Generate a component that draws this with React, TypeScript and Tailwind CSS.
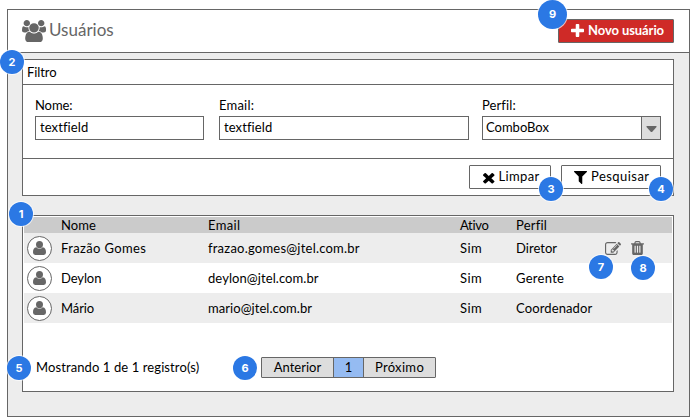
import type { ReactNode } from "react";

const USERS =
  "M657 896q-162 5-265 128h-134q-82 0-138-40.5t-56-118.5q0-353 124-353 6 0 43.5 21t97.5 42.5 119 21.5q67 0 133-23-5 37-5 66 0 159 90 256zm1071 637q0 120-73 189.5t-194 69.5h-874q-121 0-194-69.5t-73-189.5q0-53 3.5-103.5t14-109 26.5-108.5 43-97.5 62-81 85.5-53.5 111.5-20q10 0 43 21.5t73 48 107 48 135 21.5 135-21.5 107-48 73-48 43-21.5q61 0 111.5 20t85.5 53.5 62 81 43 97.5 26.5 108.5 14 109 3.5 103.5zm-1024-1277q0 106-75 181t-181 75-181-75-75-181 75-181 181-75 181 75 75 181zm704 384q0 159-112.5 271.5t-271.5 112.5-271.5-112.5-112.5-271.5 112.5-271.5 271.5-112.5 271.5 112.5 112.5 271.5zm576 225q0 78-56 118.5t-138 40.5h-134q-103-123-265-128 90-97 90-256 0-29-5-66 66 23 133 23 59 0 119-21.5t97.5-42.5 43.5-21q124 0 124 353zm-128-609q0 106-75 181t-181 75-181-75-75-181 75-181 181-75 181 75 75 181z";
const USER =
  "M6.5 0a3.5 3.6 0 0 1 3.5 3.6 3.5 3.6 0 0 1-7 0A3.5 3.6 0 0 1 6.5 0zM3.3 6.2Q4.7 7.8 6.5 7.8T9.7 6.2C12.2 6.4 13 8.6 13 11.6Q13 14 10.8 14H2.2Q0 14 0 11.6C0 8.6.8 6.4 3.3 6.2z";
const PLUS =
  "M1600 736v192q0 40-28 68t-68 28h-416v416q0 40-28 68t-68 28h-192q-40 0-68-28t-28-68v-416h-416q-40 0-68-28t-28-68v-192q0-40 28-68t68-28h416v-416q0-40 28-68t68-28h192q40 0 68 28t28 68v416h416q40 0 68 28t28 68z";
const TIMES =
  "M1490 1322q0 40-28 68l-136 136q-28 28-68 28t-68-28l-294-294-294 294q-28 28-68 28t-68-28l-136-136q-28-28-28-68t28-68l294-294-294-294q-28-28-28-68t28-68l136-136q28-28 68-28t68 28l294 294 294-294q28-28 68-28t68 28l136 136q28 28 28 68t-28 68l-294 294 294 294q28 28 28 68z";
const FILTER =
  "M1595 295q17 41-14 70l-493 493v742q0 42-39 59-13 5-25 5-27 0-45-19l-256-256q-19-19-19-45v-486l-493-493q-31-29-14-70 17-39 59-39h1280q42 0 59 39z";
const EDIT =
  "M888 1184l116-116-152-152-116 116v56h96v96h56zm440-720q-16-16-33 1l-350 350q-17 17-1 33t33-1l350-350q17-17 1-33zm80 594v190q0 119-84.5 203.5t-203.5 84.5h-832q-119 0-203.5-84.5t-84.5-203.5v-832q0-119 84.5-203.5t203.5-84.5h832q63 0 117 25 15 7 18 23 3 17-9 29l-49 49q-14 14-32 8-23-6-45-6h-832q-66 0-113 47t-47 113v832q0 66 47 113t113 47h832q66 0 113-47t47-113v-126q0-13 9-22l64-64q15-15 35-7t20 29zm-96-738l288 288-672 672h-288v-288zm444 132l-92 92-288-288 92-92q28-28 68-28t68 28l152 152q28 28 28 68t-28 68z";
const TRASH =
  "M704 1376v-704q0-14-9-23t-23-9h-64q-14 0-23 9t-9 23v704q0 14 9 23t23 9h64q14 0 23-9t9-23zm256 0v-704q0-14-9-23t-23-9h-64q-14 0-23 9t-9 23v704q0 14 9 23t23 9h64q14 0 23-9t9-23zm256 0v-704q0-14-9-23t-23-9h-64q-14 0-23 9t-9 23v704q0 14 9 23t23 9h64q14 0 23-9t9-23zm-544-992h448l-48-117q-7-9-17-11h-317q-10 2-17 11zm928 32v64q0 14-9 23t-23 9h-96v948q0 83-47 143.5t-113 60.5h-832q-66 0-113-58.5t-47-141.5v-952h-96q-14 0-23-9t-9-23v-64q0-14 9-23t23-9h309l70-167q15-37 54-63t79-26h320q40 0 79 26t54 63l70 167h309q14 0 23 9t9 23z";

function Icon({ d, box, className }: { d: string; box: string; className: string }) {
  return (
    <svg viewBox={box} preserveAspectRatio="none" fill="currentColor" className={`shrink-0 ${className}`}>
      <path d={d} />
    </svg>
  );
}

function Badge({ n, className }: { n: number; className: string }) {
  return (
    <span
      className={`absolute z-10 flex items-center justify-center rounded-full bg-[#2b78e4] font-['Inter','Lato',sans-serif] text-[11px] leading-none font-bold text-white shadow-[0_0_0_1px_rgba(255,255,255,0.7)] ${className}`}
    >
      {n}
    </span>
  );
}

function Field({ label, labelClass, className, children }: { label: string; labelClass: string; className: string; children: ReactNode }) {
  return (
    <div className={className}>
      <div className={`h-4 leading-4 ${labelClass}`}>{label}</div>
      <div className="mt-[3px] flex h-6 border border-[#666] bg-white">{children}</div>
    </div>
  );
}

const rows = [
  { name: "Frazão Gomes", nameClass: "tracking-[0.36px]", email: "frazao.gomes@jtel.com.br", emailClass: "tracking-[0.22px]", role: "Diretor", roleClass: "tracking-[0.02px]", actions: true },
  { name: "Deylon", nameClass: "tracking-[-0.1px]", email: "deylon@jtel.com.br", emailClass: "tracking-[0.08px]", role: "Gerente", roleClass: "tracking-[0.28px]", actions: false },
  { name: "Mário", nameClass: "tracking-[-0.1px]", email: "mario@jtel.com.br", emailClass: "tracking-[0.05px]", role: "Coordenador", roleClass: "tracking-[0.12px]", actions: false },
];

const COLS = "grid grid-cols-[37px_147px_252px_56px_88px_27px_1fr] items-center";

export default function App() {
  return (
    <div className="relative h-[417px] w-[690px] overflow-hidden bg-white pt-[9px] pl-[7px] font-['Lato','Liberation_Sans',sans-serif] text-[13px] whitespace-nowrap text-black">
      <div className="flex h-[408px] w-[683px] flex-col border border-[#666] bg-[#ededed]">
        <header className="flex h-[43px] shrink-0 items-start border-b border-[#666] bg-white pr-[15px] pl-[14px]">
          <Icon d={USERS} box="64 0 1920 1792" className="mt-[10px] h-[22px] w-6 text-[#666]" />
          <h1 className="mt-[9px] ml-[3px] text-[17px] leading-[22px] text-[#666]">Usuários</h1>
          <button className="mt-[9px] ml-auto flex h-6 w-[116px] rounded-[1px] border border-[#666] bg-[#cf2a27] pl-3 text-white">
            <Icon d={PLUS} box="192 128 1408 1408" className="mt-1 h-[13px] w-[13px]" />
            <span className="ml-1 leading-[21px] font-bold tracking-[-0.08px]">Novo usuário</span>
          </button>
        </header>

        <section className="mt-[6px] ml-[14px] flex h-[137px] w-[652px] shrink-0 flex-col border border-[#666] bg-white">
          <div className="h-[25px] border-b border-[#666] pl-1 leading-6 tracking-[-0.1px]">Filtro</div>
          <div className="flex h-[74px] border-b border-[#666] pt-3 pl-3">
            <Field label="Nome:" labelClass="tracking-[-0.1px]" className="w-[169px]">
              <span className="pl-1 leading-[21px] tracking-[0.1px]">textfield</span>
            </Field>
            <Field label="Email:" labelClass="tracking-[0.2px]" className="ml-[15px] w-[250px]">
              <span className="pl-1 leading-[21px] tracking-[0.1px]">textfield</span>
            </Field>
            <Field label="Perfil:" labelClass="tracking-[0.1px]" className="ml-[13px] w-[179px]">
              <span className="flex-1 pl-[3px] leading-[21px]">ComboBox</span>
              <span className="flex w-[19px] items-start justify-center border-l border-[#666] bg-[#ddd] pt-[9px]">
                <svg viewBox="0 0 11 6" className="h-[6px] w-[11px] text-[#666]" fill="currentColor">
                  <path d="M1 0h9q1 0 .5 1L6.5 5.4q-1 1-2 0L.5 1Q0 0 1 0z" />
                </svg>
              </span>
            </Field>
          </div>
          <div className="flex justify-end gap-[10px] pt-[6px] pr-3">
            <button className="flex h-6 w-[82px] rounded-[1px] border border-[#666] bg-white pl-[13px]">
              <Icon d={TIMES} box="302 238 1188 1316" className="mt-[6px] h-[11.5px] w-[11.5px]" />
              <span className="ml-[4px] leading-[21px] tracking-[0.35px]">Limpar</span>
            </button>
            <button className="flex h-6 w-[100px] rounded-[1px] border border-[#666] bg-white pl-3">
              <Icon d={FILTER} box="192 256 1408 1408" className="mt-[5px] h-[13px] w-[13px]" />
              <span className="ml-[4px] leading-[21px] tracking-[0.45px]">Pesquisar</span>
            </button>
          </div>
        </section>

        <section className="mt-[19px] ml-[14px] h-[177px] w-[652px] shrink-0 border border-[#666] bg-white px-px pt-px">
          <div className={`${COLS} h-4 bg-[#cbcbcb] leading-4`}>
            <span className="col-start-2 tracking-[0.1px]">Nome</span>
            <span className="tracking-[0.35px]">Email</span>
            <span className="tracking-[-0.3px]">Ativo</span>
            <span className="tracking-[0.2px]">Perfil</span>
          </div>
          {rows.map((r, i) => (
            <div key={r.name} className={`${COLS} h-[30px] leading-4 ${i % 2 === 0 ? "bg-[#ededed]" : "bg-white"}`}>
              <span className="ml-[3px] flex h-[25px] w-[25px] justify-center rounded-full border border-[#666] bg-white pt-[4px]">
                <Icon d={USER} box="0 0 13 14" className="h-[14px] w-[13px] text-[#666]" />
              </span>
              <span className={r.nameClass}>{r.name}</span>
              <span className={r.emailClass}>{r.email}</span>
              <span className="tracking-[0.4px]">Sim</span>
              <span className={r.roleClass}>{r.role}</span>
              {r.actions && (
                <>
                  <Icon d={EDIT} box="0 128 1784 1408" className="ml-[1px] h-[13px] w-4 text-[#666]" />
                  <Icon d={TRASH} box="192 128 1408 1536" className="h-[14px] w-[13px] text-[#666]" />
                </>
              )}
            </div>
          ))}
          <div className="flex pt-[34px] pl-3">
            <span className="w-[225px] leading-5 tracking-[0.1px]">Mostrando 1 de 1 registro(s)</span>
            <nav className="flex h-[21px] w-[175px] rounded-[1px] border border-[#666] bg-[#ddd] text-center leading-[18px]">
              <span className="w-[71px]">Anterior</span>
              <span className="w-[31px] border-x border-[#666] bg-[#95bbf2]">1</span>
              <span className="flex-1 tracking-[0.33px]">Próximo</span>
            </nav>
          </div>
        </section>
      </div>

      <Badge n={9} className="top-0 left-[538px] h-[29px] w-[29px]" />
      <Badge n={2} className="top-[50px] left-0 h-6 w-6" />
      <Badge n={3} className="top-[177px] left-[539px] h-6 w-6" />
      <Badge n={4} className="top-[177px] left-[649px] h-6 w-6" />
      <Badge n={1} className="top-[202px] left-[9px] h-6 w-6" />
      <Badge n={7} className="top-[255px] left-[589px] h-6 w-6" />
      <Badge n={8} className="top-[256px] left-[631px] h-6 w-6" />
      <Badge n={5} className="top-[356px] left-[7px] h-6 w-6" />
      <Badge n={6} className="top-[356px] left-[233px] h-6 w-6" />
    </div>
  );
}
